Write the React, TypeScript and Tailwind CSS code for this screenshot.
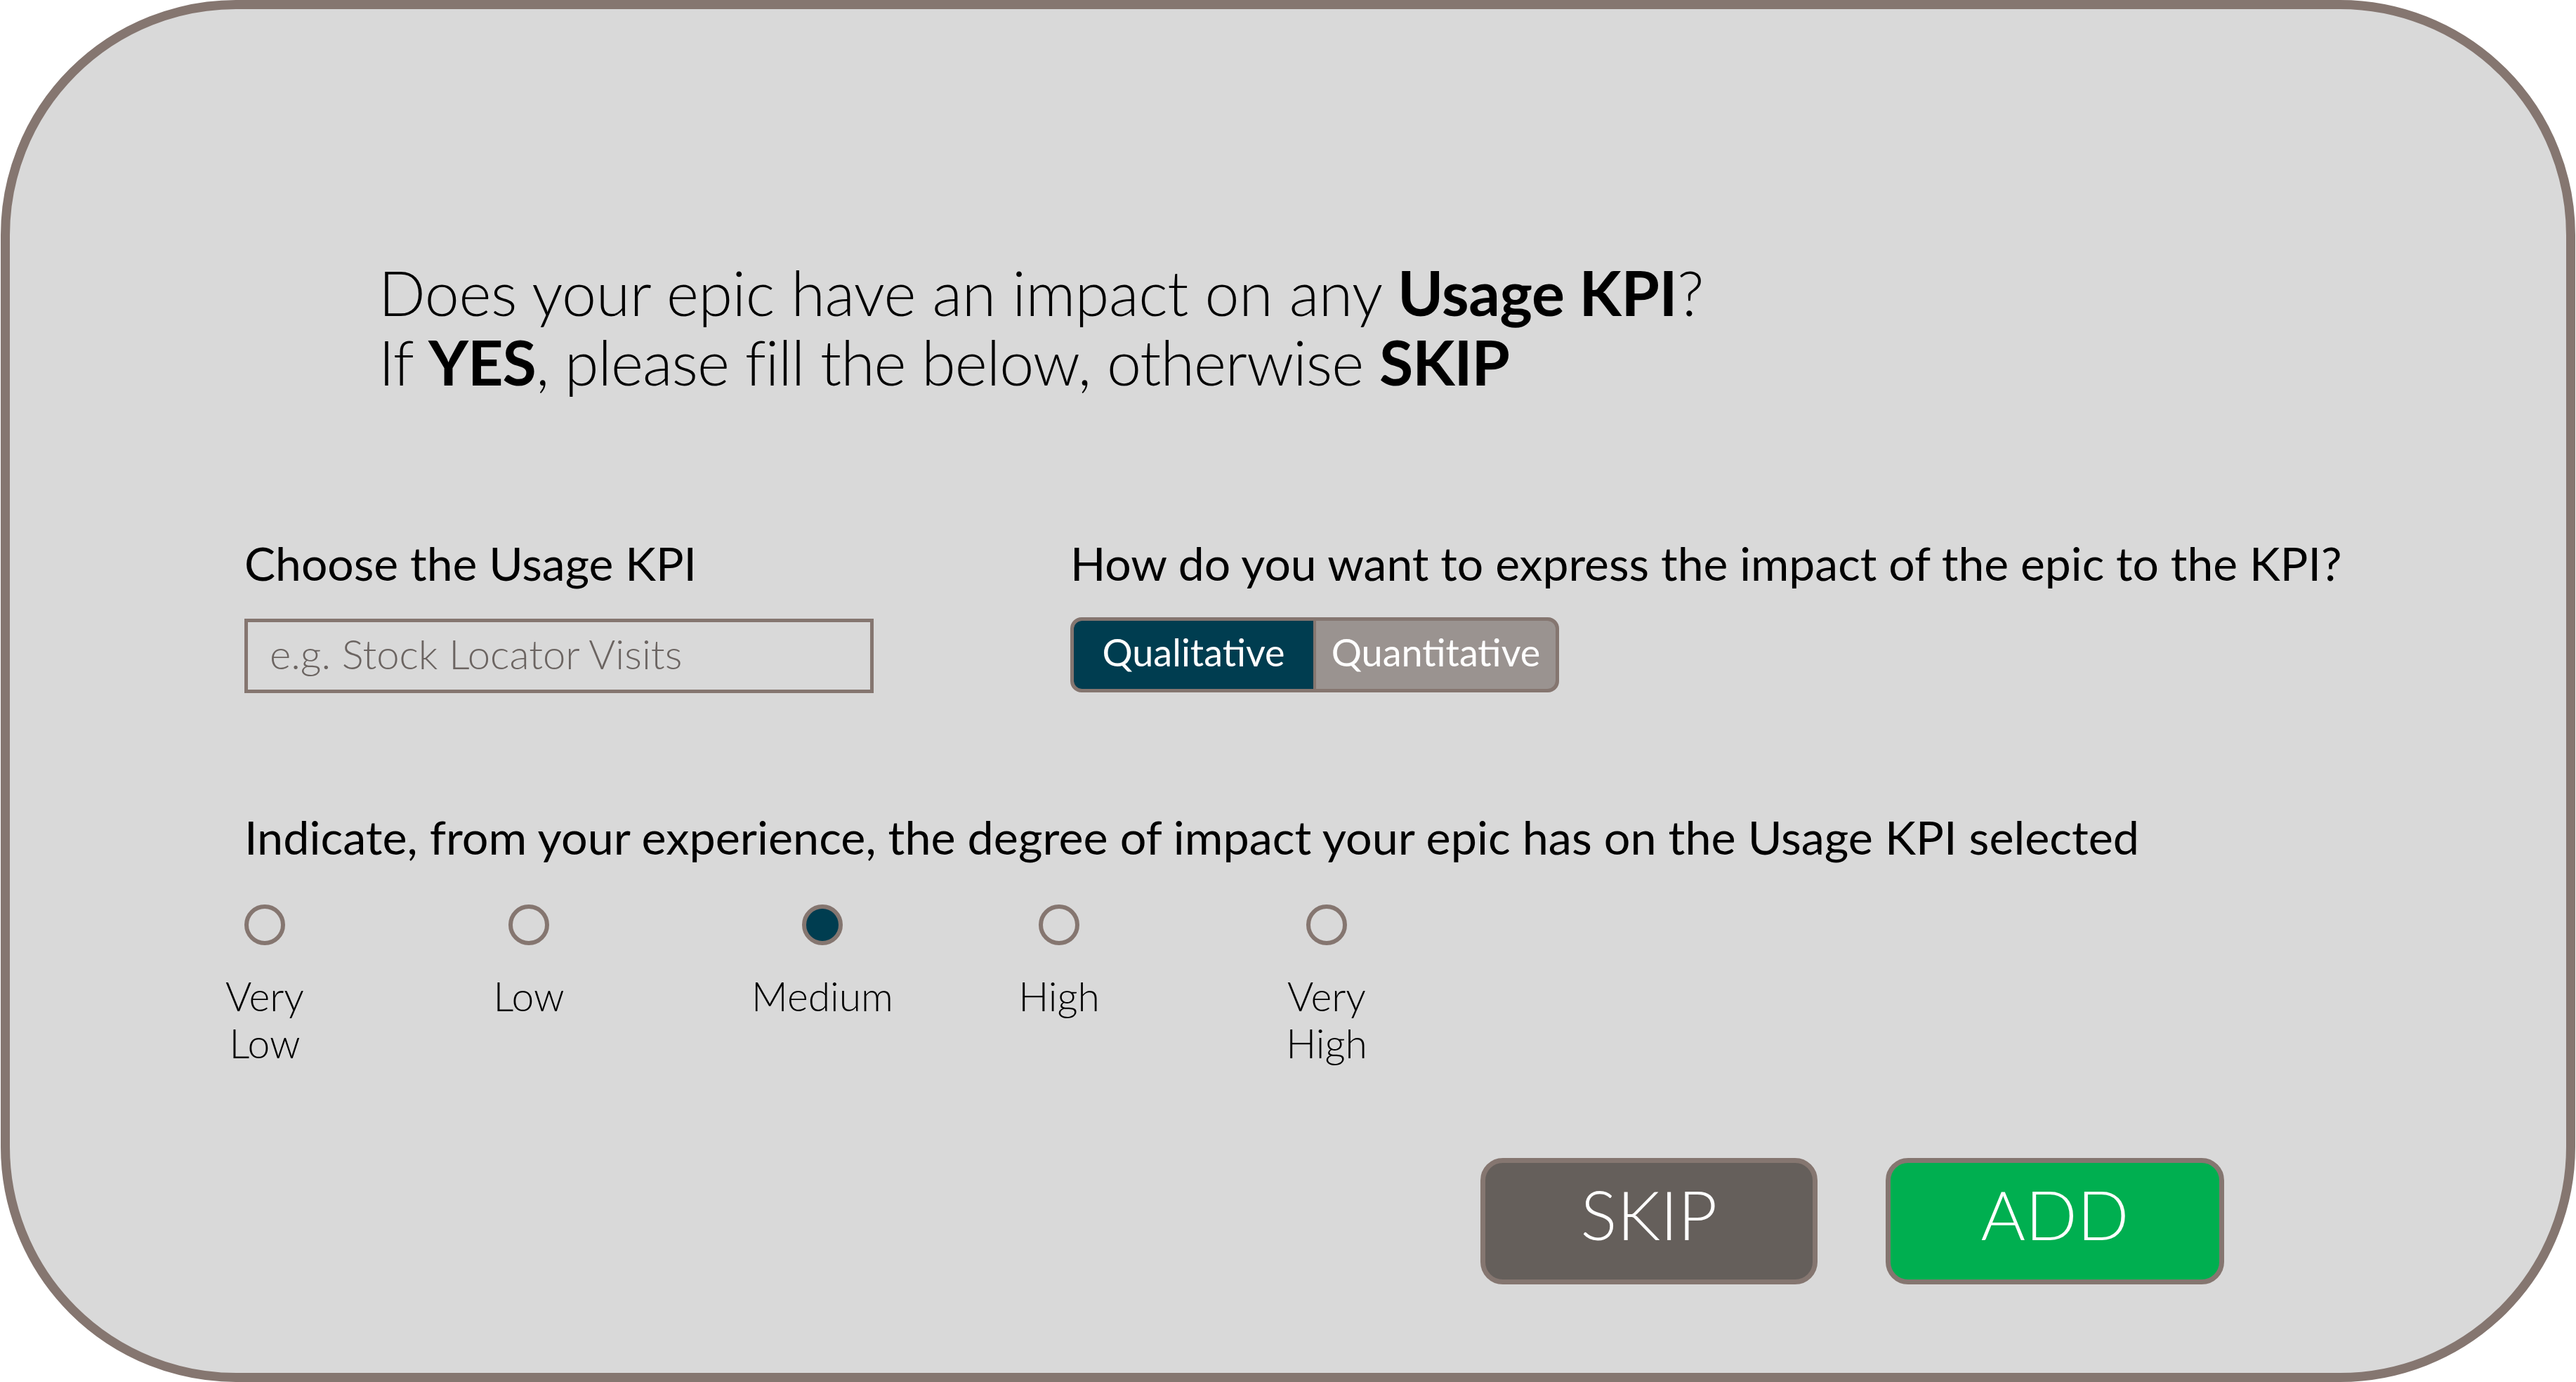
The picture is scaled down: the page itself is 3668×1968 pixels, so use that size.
import React, { useState } from "react";

const levels = [
    { label: "Very Low", lines: ["Very", "Low"], gap: "ml-0" },
    { label: "Low", lines: ["Low"], gap: "ml-[318px]" },
    { label: "Medium", lines: ["Medium"], gap: "ml-[360px]" },
    { label: "High", lines: ["High"], gap: "ml-[279px]" },
    { label: "Very High", lines: ["Very", "High"], gap: "ml-[323px]" },
];

const RadioItem: React.FC<{
    lines: string[];
    gap: string;
    checked: boolean;
    onSelect: () => void;
}> = ({ lines, gap, checked, onSelect }) => {
    return (
        <div
            className={`${gap} w-[58px] flex flex-col items-center cursor-pointer`}
            onClick={onSelect}
        >
            <div
                className={`w-[58px] h-[58px] rounded-full border-[6px] border-[#857670] ${
                    checked ? "bg-[#003d50]" : "bg-transparent"
                }`}
            />
            <div className="mt-[39px] text-[57px] leading-[67px] font-light text-black text-center whitespace-nowrap">
                {lines.map((l) => (
                    <div key={l}>{l}</div>
                ))}
            </div>
        </div>
    );
};

const App: React.FC = () => {
    const [mode, setMode] = useState("qual");
    const [level, setLevel] = useState("Medium");

    return (
        <div className="w-[3668px] h-[1968px] bg-white font-['Lato',sans-serif]">
            <div className="w-[3666px] h-[1968px] ml-[1px] bg-[#d9d9d9] border-[13px] border-[#857670] rounded-[335px] pt-[354px] pl-[334px]">
                <div className="ml-[191px] text-[88px] leading-[99px] font-light tracking-[-0.4px] text-black">
                    <div>
                        Does your epic have an impact on any{" "}
                        <span className="font-bold">Usage KPI</span>?
                    </div>
                    <div className="tracking-[-1px]">
                        If <span className="font-bold">YES</span>, please fill the below, otherwise{" "}
                        <span className="font-bold">SKIP</span>
                    </div>
                </div>

                <div className="mt-[196px] grid grid-cols-[1176px_1fr]">
                    <div>
                        <div className="text-[66px] leading-[82px] text-black">
                            Choose the Usage KPI
                        </div>
                        <div className="mt-[38px] w-[896px] h-[106px] border-[5px] border-[#857670] flex items-center pl-[31px] pb-[8px]">
                            <span className="text-[58px] font-light text-[#6b6461]">
                                e.g. Stock Locator Visits
                            </span>
                        </div>
                    </div>
                    <div>
                        <div className="text-[66px] leading-[82px] text-black">
                            How do you want to express the impact of the epic to the KPI?
                        </div>
                        <div className="mt-[36px] w-[696px] h-[107px] border-[5px] border-[#857670] rounded-[16px] overflow-hidden flex bg-[#857670] gap-[4px]">
                            <button
                                className={`flex-1 h-full rounded-l-[12px] text-[54px] text-white pb-[8px] ${
                                    mode === "qual" ? "bg-[#003d50]" : "bg-[#9a9390]"
                                }`}
                                onClick={() => setMode("qual")}
                            >
                                Qualitative
                            </button>
                            <button
                                className={`flex-1 h-full rounded-r-[12px] text-[54px] text-white pb-[8px] ${
                                    mode === "quant" ? "bg-[#003d50]" : "bg-[#9a9390]"
                                }`}
                                onClick={() => setMode("quant")}
                            >
                                Quantitative
                            </button>
                        </div>
                    </div>
                </div>

                <div className="mt-[163px] text-[66.5px] leading-[82px] text-black">
                    Indicate, from your experience, the degree of impact your epic has on the Usage KPI selected
                </div>

                <div className="mt-[56px] flex">
                    {levels.map((lv) => (
                        <RadioItem
                            key={lv.label}
                            lines={lv.lines}
                            gap={lv.gap}
                            checked={level === lv.label}
                            onSelect={() => setLevel(lv.label)}
                        />
                    ))}
                </div>

                {/* actions */}
                <div className="mt-[130px] ml-[1760px] flex gap-[97px]">
                    <button className="w-[480px] h-[180px] rounded-[32px] border-[7px] border-[#857670] bg-[#655f5b] text-white text-[97px] font-light pb-[24px]">
                        SKIP
                    </button>
                    <button className="w-[482px] h-[180px] rounded-[32px] border-[7px] border-[#857670] bg-[#00af50] text-white text-[97px] font-light pb-[24px]">
                        ADD
                    </button>
                </div>
            </div>
        </div>
    );
};

export default App;
